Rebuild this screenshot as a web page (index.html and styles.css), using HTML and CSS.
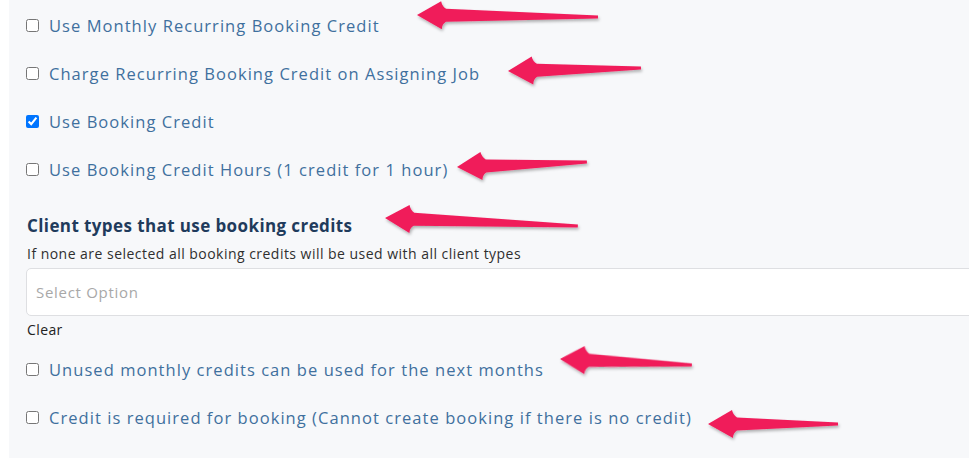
FILE: index.html
```html
<!DOCTYPE html>
<html>
<head>
<meta charset="utf-8">
<link rel="stylesheet" href="styles.css">
</head>
<body>
<div class="panel">
  <label class="check-row"><input type="checkbox"><span>Use Monthly Recurring Booking Credit</span></label>
  <label class="check-row"><input type="checkbox"><span>Charge Recurring Booking Credit on Assigning Job</span></label>
  <label class="check-row"><input type="checkbox" checked><span>Use Booking Credit</span></label>
  <label class="check-row"><input type="checkbox"><span>Use Booking Credit Hours (1 credit for 1 hour)</span></label>

  <h3 class="section-title">Client types that use booking credits</h3>
  <p class="helper">If none are selected all booking credits will be used with all client types</p>
  <div class="select-box"><span class="placeholder">Select Option</span></div>
  <div class="clear">Clear</div>

  <label class="check-row after-clear"><input type="checkbox"><span>Unused monthly credits can be used for the next months</span></label>
  <label class="check-row"><input type="checkbox"><span>Credit is required for booking (Cannot create booking if there is no credit)</span></label>
</div>

<svg class="arrows" width="969" height="458" viewBox="0 0 969 458">
  <defs>
    <filter id="sh" x="-10%" y="-50%" width="120%" height="200%">
      <feDropShadow dx="1" dy="2" stdDeviation="1.5" flood-color="#000" flood-opacity="0.3"/>
    </filter>
  </defs>
  <g fill="#f01c5a" filter="url(#sh)">
    <g transform="translate(417 15) rotate(0.6)"><path d="M0,0 L24,-14 Q25,-9 29,-6.5 L181,-1.5 L181,1.5 L29,6.5 Q25,9 25,14 Z"/></g>
    <g transform="translate(508 71) rotate(-1.3)"><path d="M0,0 L24,-14 Q25,-9 29,-6.5 L133,-1.5 L133,1.5 L29,6.5 Q25,9 25,14 Z"/></g>
    <g transform="translate(457 167) rotate(-2.2)"><path d="M0,0 L24,-14 Q25,-9 29,-6.5 L130,-1.5 L130,1.5 L29,6.5 Q25,9 25,14 Z"/></g>
    <g transform="translate(385 218) rotate(2.4)"><path d="M0,0 L24,-14 Q25,-9 29,-6.5 L193,-1.5 L193,1.5 L29,6.5 Q25,9 25,14 Z"/></g>
    <g transform="translate(560 359) rotate(2.6)"><path d="M0,0 L24,-14 Q25,-9 29,-6.5 L132,-1.5 L132,1.5 L29,6.5 Q25,9 25,14 Z"/></g>
    <g transform="translate(708 424) rotate(0)"><path d="M0,0 L24,-14 Q25,-9 29,-6.5 L130,-1.5 L130,1.5 L29,6.5 Q25,9 25,14 Z"/></g>
  </g>
</svg>
</body>
</html>
```

FILE: styles.css
```css
html, body {
  margin: 0;
  padding: 0;
  background: #ffffff;
  overflow: hidden;
  width: 969px;
  height: 458px;
}

body {
  position: relative;
  font-family: "Open Sans", "DejaVu Sans", sans-serif;
}

.panel {
  margin-left: 9px;
  width: 1100px;
  height: 458px;
  background: #f7f8fa;
  padding: 13px 0 0 17px;
  box-sizing: border-box;
  display: flex;
  flex-direction: column;
  align-items: flex-start;
}

.check-row {
  display: flex;
  align-items: center;
  gap: 10px;
  height: 24px;
  margin-bottom: 24px;
  font-size: 16.5px;
  color: #3f709e;
  letter-spacing: 1.05px;
}

.check-row input {
  margin: 0;
  width: 13px;
  height: 13px;
}

.section-title {
  margin: 9px 0 0 1px;
  font-size: 17px;
  line-height: 24px;
  font-weight: 700;
  color: #1f3b5c;
  letter-spacing: 0.4px;
}

.helper {
  margin: 6px 0 0 1px;
  font-size: 14px;
  line-height: 20px;
  color: #2f2f2f;
  letter-spacing: 0.47px;
}

.select-box {
  margin-top: 4px;
  width: 1000px;
  height: 48px;
  box-sizing: border-box;
  border: 1px solid #dedfe2;
  border-radius: 5px;
  background: #ffffff;
  display: flex;
  align-items: center;
  padding-left: 9px;
}

.placeholder {
  font-size: 15px;
  color: #a8a8a8;
  letter-spacing: 0.7px;
}

.clear {
  margin: 4px 0 0 1px;
  font-size: 14px;
  line-height: 20px;
  color: #222222;
  letter-spacing: 0.4px;
}

.after-clear {
  margin-top: 17px;
}

.arrows {
  position: absolute;
  left: 0;
  top: 0;
  pointer-events: none;
}
```
